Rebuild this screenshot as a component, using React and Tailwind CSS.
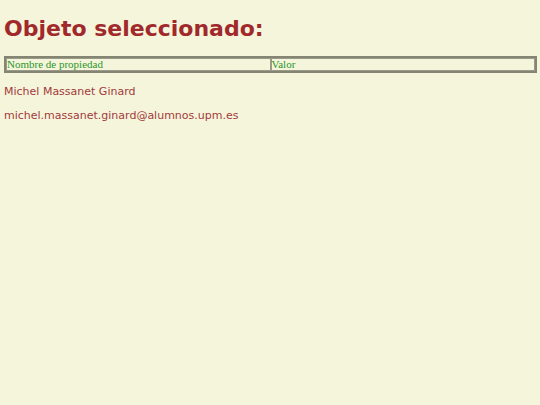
import React from 'react';

const App = () => {
  return (
    <div className="min-h-[405px] w-full bg-[#f5f5dc] px-1 pt-[15px] text-[#a33a3a]" style={{ fontFamily: '"DejaVu Sans", Verdana, sans-serif' }}>
      <h1 className="text-[22px] font-bold leading-[28px] text-[#a0292b]">Objeto seleccionado:</h1>
      <table className="mt-[13px] w-[533px] border-2 border-[#858573] border-separate border-spacing-0 text-[11px] leading-[11px] text-[#2a952a]" style={{ fontFamily: '"Liberation Serif", "Times New Roman", serif' }}>
        <tbody>
          <tr>
            <td className="w-1/2 border border-[#9a9a88] px-0 py-0">Nombre de propiedad</td>
            <td className="w-1/2 border border-[#9a9a88] px-0 py-0">Valor</td>
          </tr>
        </tbody>
      </table>
      <p className="mt-[11px] text-[11px] leading-[15px]">Michel Massanet Ginard</p>
      <p className="mt-[9px] text-[11px] leading-[15px]">michel.massanet.ginard@alumnos.upm.es</p>
    </div>
  );
};

export default App;
